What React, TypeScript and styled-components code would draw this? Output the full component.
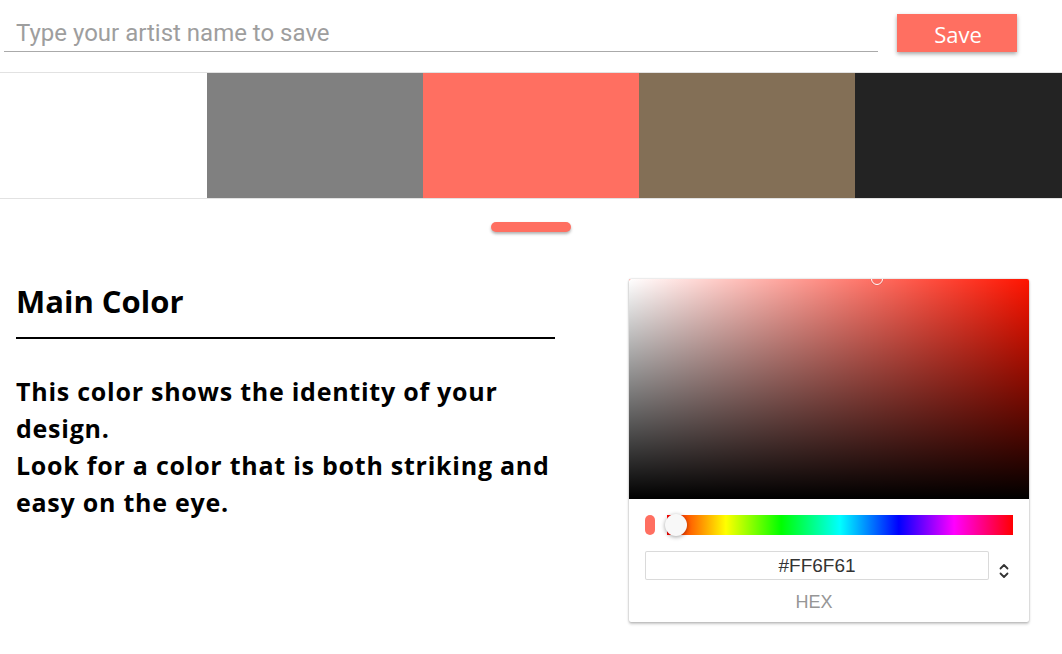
import React from "react";
import styled, { createGlobalStyle } from "styled-components";

const GlobalStyle = createGlobalStyle`
  html, body { margin: 0; padding: 0; background: #fff; }
  body { font-family: "Open Sans", "Noto Sans CJK KR", sans-serif; color: #000; }
  * { box-sizing: border-box; }
`;

const Page = styled.div`
  width: 1062px;
  height: 654px;
  overflow: hidden;
  background: #fff;
`;

const Header = styled.header`
  display: flex;
  align-items: flex-end;
  gap: 19px;
  height: 72px;
  padding: 0 0 20px 4px;
`;

const NameInput = styled.input`
  width: 874px;
  height: 38px;
  border: none;
  border-bottom: 1px solid #aaaaaa;
  outline: none;
  padding: 0 0 0 12px;
  font-family: Roboto, "Liberation Sans", sans-serif;
  font-size: 24px;
  color: #333;
  background: transparent;
  &::placeholder { color: #9e9e9e; }
`;

const SaveButton = styled.button`
  width: 120px;
  height: 38px;
  border: none;
  background: #ff6f61;
  color: #fff;
  font-family: "Open Sans", "Noto Sans CJK KR", sans-serif;
  font-size: 22px;
  padding: 2px 0 0 2px;
  box-shadow: 0 2px 4px rgba(0, 0, 0, 0.35);
  cursor: pointer;
`;

const Palette = styled.div`
  display: grid;
  grid-template-columns: 207px 216px 216px 216px 1fr;
  height: 127px;
  border-top: 1px solid #e2e2e2;
  border-bottom: 1px solid #e2e2e2;
`;

const Swatch = styled.div<{ $color: string }>`
  background: ${(p) => p.$color};
`;

const IndicatorRow = styled.div`
  display: flex;
  justify-content: center;
  padding-top: 23px;
`;

const Indicator = styled.div`
  width: 80px;
  height: 10px;
  border-radius: 5px;
  background: #ff6f61;
  box-shadow: 0 2px 3px rgba(0, 0, 0, 0.3);
`;

const Content = styled.section`
  display: flex;
  align-items: flex-start;
  gap: 74px;
  padding: 47px 0 0 16px;
`;

const Info = styled.div`
  width: 539px;
`;

const Title = styled.h2`
  margin: 0;
  font-size: 31px;
  font-weight: 700;
  line-height: 44px;
  padding-bottom: 14px;
  border-bottom: 2px solid #000;
`;

const Description = styled.p`
  margin: 34px 0 0;
  font-size: 25px;
  font-weight: 700;
  line-height: 37px;
  letter-spacing: 0.75px;
`;

const Picker = styled.div`
  width: 400px;
  background: #fff;
  border-radius: 2px;
  box-shadow: 0 0 2px rgba(0, 0, 0, 0.25), 0 2px 3px rgba(0, 0, 0, 0.22);
  overflow: hidden;
`;

const Saturation = styled.div<{ $hue: string }>`
  position: relative;
  height: 220px;
  overflow: hidden;
  background:
    linear-gradient(to top, #000, rgba(0, 0, 0, 0)),
    linear-gradient(to right, #fff, rgba(255, 255, 255, 0)),
    ${(p) => p.$hue};
`;

const SatPointer = styled.div`
  position: absolute;
  width: 12px;
  height: 12px;
  border-radius: 50%;
  border: 1.5px solid #fff;
  box-shadow: 0 0 1px rgba(0, 0, 0, 0.4);
  transform: translate(-6px, -6px);
`;

const Body = styled.div`
  padding: 16px 16px 10px;
`;

const HueRow = styled.div`
  display: flex;
  align-items: center;
  gap: 12px;
`;

const Preview = styled.div<{ $color: string }>`
  width: 10px;
  height: 20px;
  border-radius: 5px;
  background: ${(p) => p.$color};
`;

const HueBar = styled.div`
  position: relative;
  flex: 1;
  height: 20px;
  background: linear-gradient(
    to right,
    #f00 0%,
    #ff0 17%,
    #0f0 33%,
    #0ff 50%,
    #00f 67%,
    #f0f 83%,
    #f00 100%
  );
`;

const HueThumb = styled.div`
  position: absolute;
  top: -1px;
  width: 22px;
  height: 22px;
  border-radius: 50%;
  background: #f8f8f8;
  box-shadow: 0 1px 4px rgba(0, 0, 0, 0.37);
  transform: translateX(-11px);
`;

const FieldRow = styled.div`
  display: flex;
  align-items: flex-start;
  margin-top: 16px;
`;

const FieldCol = styled.div`
  flex: 1;
  display: flex;
  flex-direction: column;
  align-items: center;
`;

const HexInput = styled.input`
  width: 100%;
  height: 29px;
  border: none;
  box-shadow: inset 0 0 0 1px #dadada;
  border-radius: 2px;
  text-align: center;
  font-family: "Liberation Sans", Arial, sans-serif;
  font-size: 19px;
  color: #333;
  outline: none;
  padding: 0;
`;

const FieldLabel = styled.span`
  margin-top: 12px;
  margin-right: 6px;
  font-family: "Liberation Sans", Arial, sans-serif;
  font-size: 18px;
  line-height: 20px;
  color: #969696;
  text-transform: uppercase;
`;

const Toggle = styled.div`
  width: 24px;
  display: flex;
  justify-content: flex-end;
  padding-top: 12px;
  padding-right: 4px;
`;

export default function App() {
  const colors = ["#ffffff", "#808080", "#ff6f61", "#836f56", "#232323"];
  const hue = 4.6;
  const sat = 0.62;
  return (
    <Page>
      <GlobalStyle />
      <Header>
        <NameInput placeholder="Type your artist name to save" />
        <SaveButton>Save</SaveButton>
      </Header>
      <Palette>
        {colors.map((c) => (
          <Swatch key={c} $color={c} />
        ))}
      </Palette>
      <IndicatorRow>
        <Indicator />
      </IndicatorRow>
      <Content>
        <Info>
          <Title>Main Color</Title>
          <Description>
            This color shows the identity of your design.
            <br />
            Look for a color that is both striking and easy on the eye.
          </Description>
        </Info>
        <Picker>
          <Saturation $hue={`hsl(${hue}, 100%, 50%)`}>
            <SatPointer style={{ left: `${sat * 100}%`, top: "0%" }} />
          </Saturation>
          <Body>
            <HueRow>
              <Preview $color="#ff6f61" />
              <HueBar>
                <HueThumb style={{ left: `${(hue / 360) * 100 + 1.4}%` }} />
              </HueBar>
            </HueRow>
            <FieldRow>
              <FieldCol>
                <HexInput readOnly value="#FF6F61" />
                <FieldLabel>hex</FieldLabel>
              </FieldCol>
              <Toggle>
                <svg width="10" height="16" viewBox="0 0 10 16" fill="none">
                  <path
                    d="M1.5 5.5 L5 2 L8.5 5.5"
                    stroke="#333"
                    strokeWidth="1.8"
                    strokeLinecap="round"
                    strokeLinejoin="round"
                  />
                  <path
                    d="M1.5 10.5 L5 14 L8.5 10.5"
                    stroke="#333"
                    strokeWidth="1.8"
                    strokeLinecap="round"
                    strokeLinejoin="round"
                  />
                </svg>
              </Toggle>
            </FieldRow>
          </Body>
        </Picker>
      </Content>
    </Page>
  );
}
